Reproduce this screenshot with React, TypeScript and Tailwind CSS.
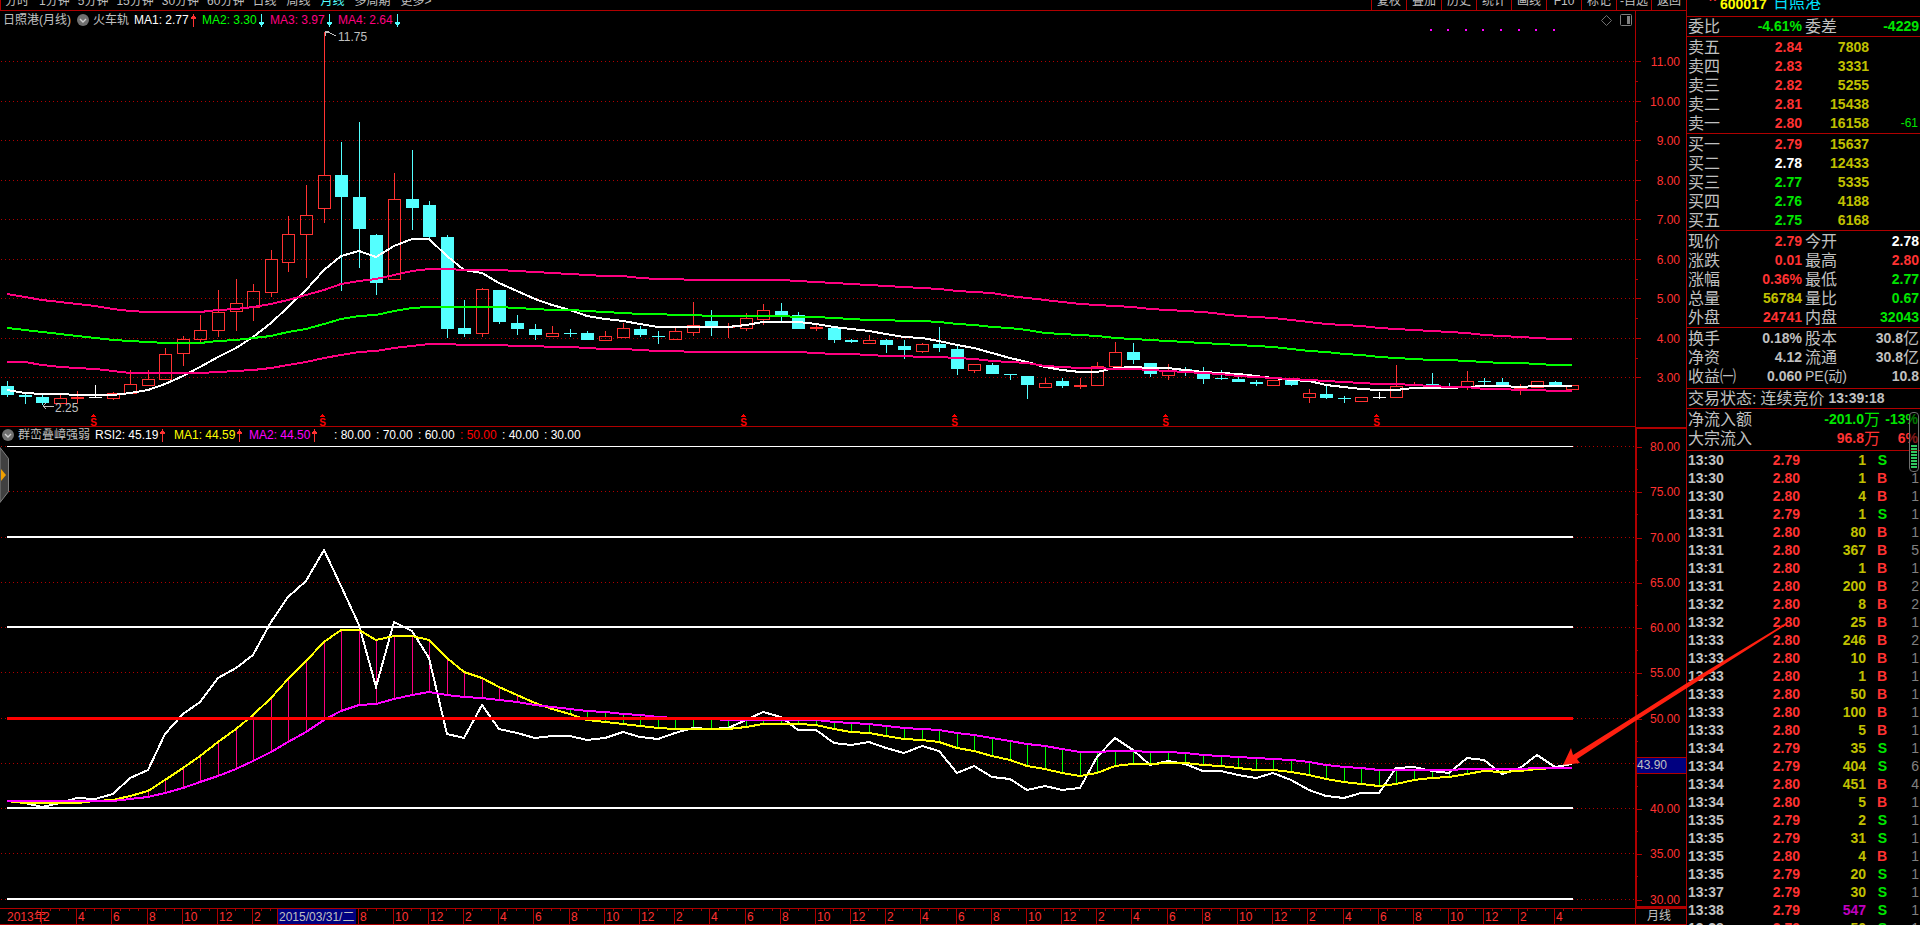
import { useMemo } from 'react';
import clsx from 'clsx';

const RED = '#ff3232';
const LINE = '#b00000';
const CYAN = '#54ffff';

const periods = ['分时', '1分钟', '5分钟', '15分钟', '30分钟', '60分钟', '日线', '周线', '月线', '多周期', '更多>'];
const tools = ['复权', '叠加', '历史', '统计', '画线', 'F10', '标记', '-自选', '返回'];

// [kind, high, body top, body bottom, low] for each month
type Candle = [string, number, number, number, number];
const candles: Candle[] = [
  ['c', 381, 386, 395, 397], ['c', 393, 395, 397, 404], ['c', 395, 397, 403, 405], ['r', 395, 398, 403, 404],
  ['r', 391, 397, 399, 403], ['w', 385, 397, 398, 398], ['r', 392, 393, 398, 400], ['r', 370, 384, 393, 393],
  ['r', 370, 379, 385, 386], ['r', 348, 354, 379, 380], ['r', 336, 339, 353, 366], ['r', 315, 330, 339, 343],
  ['r', 290, 312, 330, 337], ['r', 279, 303, 311, 331], ['r', 284, 291, 307, 321], ['r', 250, 259, 292, 297],
  ['r', 216, 234, 262, 272], ['r', 185, 215, 234, 278], ['r', 32, 175, 208, 223], ['c', 142, 175, 197, 291],
  ['c', 122, 197, 229, 268], ['c', 234, 235, 283, 295], ['r', 173, 199, 279, 280], ['c', 150, 199, 208, 230],
  ['c', 201, 205, 237, 238], ['c', 235, 237, 329, 338], ['c', 300, 328, 334, 337], ['r', 288, 289, 333, 337],
  ['c', 290, 290, 322, 324], ['c', 315, 323, 329, 335], ['c', 324, 329, 335, 340], ['r', 326, 333, 336, 337],
  ['c', 329, 333, 334, 337], ['c', 331, 333, 340, 340], ['r', 331, 336, 340, 340], ['r', 323, 328, 337, 338],
  ['c', 326, 329, 335, 337], ['c', 331, 336, 337, 344], ['r', 328, 331, 339, 339], ['r', 302, 325, 332, 336],
  ['c', 310, 321, 327, 336], ['r', 323, 327, 328, 338], ['r', 313, 318, 328, 331], ['r', 304, 310, 319, 325],
  ['c', 303, 311, 316, 321], ['c', 312, 315, 329, 329], ['r', 325, 327, 329, 331], ['c', 328, 328, 340, 343],
  ['c', 339, 340, 342, 343], ['r', 335, 340, 343, 343], ['c', 339, 340, 345, 353], ['c', 340, 346, 350, 359],
  ['r', 343, 344, 351, 353], ['c', 327, 344, 348, 352], ['c', 346, 349, 369, 375], ['r', 364, 364, 370, 373],
  ['c', 363, 365, 374, 374], ['c', 374, 374, 375, 380], ['c', 376, 376, 385, 399], ['r', 378, 383, 387, 387],
  ['c', 378, 381, 386, 388], ['r', 378, 385, 387, 389], ['r', 362, 366, 385, 385], ['r', 342, 352, 366, 368],
  ['c', 343, 352, 360, 364], ['c', 363, 363, 374, 377], ['r', 364, 371, 375, 380], ['c', 367, 369, 372, 376],
  ['c', 367, 374, 379, 384], ['c', 370, 378, 379, 380], ['c', 377, 379, 382, 382], ['c', 380, 382, 384, 386],
  ['r', 380, 380, 385, 385], ['c', 380, 380, 385, 386], ['r', 389, 393, 397, 403], ['c', 385, 394, 398, 399],
  ['c', 396, 398, 399, 403], ['r', 397, 397, 401, 401], ['w', 392, 397, 398, 399], ['r', 365, 386, 397, 397],
  ['r', 382, 384, 386, 386], ['c', 373, 384, 387, 387], ['c', 383, 387, 388, 388], ['r', 371, 381, 387, 390],
  ['c', 378, 381, 382, 386], ['c', 378, 382, 387, 387], ['r', 384, 387, 389, 395], ['r', 381, 381, 387, 387],
  ['c', 381, 382, 387, 387], ['r', 385, 385, 389, 389],
];

const ma1 = [
  390, 393, 394, 394, 395, 395, 395, 393, 390, 384, 376, 367, 357, 348, 337, 323, 307, 290, 270, 256, 251, 257, 246,
  239, 239, 256, 270, 273, 283, 291, 299, 305, 310, 316, 319, 321, 324, 327, 327, 327, 327, 327, 325, 322, 322, 322,
  324, 327, 329, 331, 334, 337, 338, 341, 345, 348, 353, 358, 362, 367, 370, 372, 372, 368, 367, 368, 368, 370, 372,
  373, 374, 376, 378, 380, 381, 385, 387, 389, 390, 390, 388, 388, 388, 387, 386, 386, 387, 386, 386, 386,
];
const ma2 = [
  328, 330, 332, 334, 336, 338, 340, 341, 342, 343, 343, 343, 341, 340, 338, 336, 332, 329, 324, 319, 316, 315, 311,
  308, 307, 307, 307, 307, 307, 308, 309, 310, 310, 311, 312, 313, 314, 314, 315, 315, 316, 316, 316, 316, 316, 317,
  317, 318, 319, 320, 320, 321, 321, 322, 324, 325, 327, 328, 330, 333, 334, 335, 336, 338, 339, 340, 341, 342, 343,
  344, 345, 346, 347, 349, 351, 352, 354, 355, 357, 358, 359, 360, 360, 361, 362, 363, 363, 364, 365, 365,
];
const ma3 = [
  294, 297, 300, 302, 304, 306, 309, 311, 312, 312, 312, 312, 310, 309, 307, 304, 300, 295, 290, 284, 281, 279, 275,
  271, 269, 269, 270, 270, 270, 271, 272, 273, 274, 275, 276, 276, 278, 279, 279, 280, 280, 280, 280, 280, 280, 281,
  282, 283, 284, 285, 286, 287, 288, 289, 291, 292, 293, 296, 298, 300, 302, 304, 305, 306, 307, 309, 310, 311, 312,
  314, 316, 317, 318, 320, 322, 324, 325, 326, 328, 329, 330, 331, 332, 333, 335, 336, 337, 338, 339, 339,
];
const ma4 = [
  362, 362, 365, 367, 368, 369, 371, 373, 373, 373, 373, 373, 372, 371, 370, 368, 365, 362, 358, 355, 352, 351, 348,
  346, 344, 344, 345, 345, 345, 346, 346, 347, 347, 348, 349, 349, 350, 351, 351, 352, 352, 352, 352, 352, 352, 352,
  353, 354, 354, 355, 356, 356, 357, 357, 358, 359, 361, 362, 363, 366, 367, 368, 368, 369, 369, 370, 371, 372, 373,
  374, 376, 377, 378, 379, 380, 381, 382, 383, 384, 384, 385, 386, 387, 387, 389, 389, 390, 390, 391, 391,
];

const rsi = [
  801, 803, 807, 803, 798, 799, 794, 778, 770, 734, 714, 702, 678, 668, 655, 622, 597, 581, 550, 586, 625, 687, 622,
  631, 658, 734, 738, 705, 729, 733, 738, 736, 736, 740, 738, 732, 737, 739, 733, 728, 729, 728, 720, 712, 717, 730,
  730, 743, 745, 742, 748, 753, 746, 751, 773, 766, 777, 779, 790, 786, 790, 788, 757, 738, 750, 765, 761, 764, 771,
  771, 775, 778, 773, 780, 790, 796, 798, 793, 793, 768, 767, 771, 773, 758, 760, 774, 768, 755, 767, 764,
];
const rsiMa1 = [
  801, 803, 803, 803, 803, 801, 800, 796, 791, 780, 768, 756, 742, 729, 715, 698, 679, 661, 642, 630, 630, 640, 636,
  636, 640, 658, 672, 678, 687, 695, 703, 709, 714, 720, 722, 724, 726, 728, 729, 729, 729, 729, 727, 724, 724, 724,
  725, 729, 732, 733, 736, 739, 740, 742, 748, 751, 756, 760, 766, 769, 773, 776, 773, 766, 764, 764, 763, 763, 765,
  766, 768, 770, 770, 772, 775, 779, 782, 784, 786, 784, 780, 778, 777, 774, 771, 772, 771, 769, 768, 768,
];
const rsiMa2 = [
  801, 801, 801, 801, 801, 801, 801, 799, 797, 793, 788, 782, 776, 769, 761, 752, 742, 732, 720, 711, 705, 704, 699,
  695, 692, 695, 697, 698, 700, 702, 705, 707, 709, 711, 712, 714, 715, 717, 718, 719, 719, 720, 720, 720, 720, 720,
  720, 722, 723, 724, 726, 728, 729, 730, 733, 735, 738, 741, 744, 746, 749, 752, 752, 751, 751, 752, 752, 753, 755,
  756, 757, 758, 759, 760, 762, 765, 767, 768, 770, 770, 770, 770, 770, 769, 769, 769, 769, 768, 768, 768,
];

const levels = [
  { line: 80, y: 446, color: '#ffffff', size: 1 },
  { line: 70, y: 537, color: '#ffffff', size: 2 },
  { line: 60, y: 627, color: '#ffffff', size: 2 },
  { line: 50, y: 718, color: '#ff0000', size: 3 },
  { line: 40, y: 808, color: '#ffffff', size: 2 },
  { line: 30, y: 899, color: '#ffffff', size: 2 },
];

const sells = [
  ['卖五', '2.84', '7808'],
  ['卖四', '2.83', '3331'],
  ['卖三', '2.82', '5255'],
  ['卖二', '2.81', '15438'],
  ['卖一', '2.80', '16158', '-61'],
];
const buys = [
  ['买一', '2.79', '15637'],
  ['买二', '2.78', '12433'],
  ['买三', '2.77', '5335'],
  ['买四', '2.76', '4188'],
  ['买五', '2.75', '6168'],
];

const trades = [
  ['13:30', '2.79', '1', 'S', ''],
  ['13:30', '2.80', '1', 'B', '1'],
  ['13:30', '2.80', '4', 'B', '1'],
  ['13:31', '2.79', '1', 'S', '1'],
  ['13:31', '2.80', '80', 'B', '1'],
  ['13:31', '2.80', '367', 'B', '5'],
  ['13:31', '2.80', '1', 'B', '1'],
  ['13:31', '2.80', '200', 'B', '2'],
  ['13:32', '2.80', '8', 'B', '2'],
  ['13:32', '2.80', '25', 'B', '1'],
  ['13:33', '2.80', '246', 'B', '2'],
  ['13:33', '2.80', '10', 'B', '1'],
  ['13:33', '2.80', '1', 'B', '1'],
  ['13:33', '2.80', '50', 'B', '1'],
  ['13:33', '2.80', '100', 'B', '1'],
  ['13:33', '2.80', '5', 'B', '1'],
  ['13:34', '2.79', '35', 'S', '1'],
  ['13:34', '2.79', '404', 'S', '6'],
  ['13:34', '2.80', '451', 'B', '4'],
  ['13:34', '2.80', '5', 'B', '1'],
  ['13:35', '2.79', '2', 'S', '1'],
  ['13:35', '2.79', '31', 'S', '1'],
  ['13:35', '2.80', '4', 'B', '1'],
  ['13:35', '2.79', '20', 'S', '1'],
  ['13:37', '2.79', '30', 'S', '1'],
  ['13:38', '2.79', '547', 'S', '1'],
  ['13:38', '2.79', '50', 'S', '1'],
];

const candleX = (i: number) => Math.round(7 + i * 17.588);
const priceY = (p: number) => Math.round(61 + (11 - p) * 39.5);
const rsiY = (v: number) => Math.round(446 + (80 - v) * 9.05);
const points = (ys: number[]) => ys.map((y, i) => `${candleX(i)},${y}`).join(' ');

const Trend = ({ up = false }) => (
  <svg width="5" height="13" viewBox="0 0 5 13" fill={up ? RED : CYAN} shapeRendering="crispEdges" className="shrink-0">
    <g transform={up ? undefined : 'rotate(180 2.5 6.5)'}>
      <path d="M2 0h1v13h-1z M1 2h3v1h-3z M0 3h5v2h-5z" />
    </g>
  </svg>
);

const Fold = () => (
  <button aria-label="指标菜单" className="shrink-0">
    <svg width="12" height="12" viewBox="0 0 12 12">
      <circle cx="6" cy="6" r="6" fill="#707070" />
      <path d="M3 5l3 3 3-3" fill="none" stroke="#d0d0d0" strokeWidth="1.4" />
    </svg>
  </button>
);

const Legend = ({ label, color, up, className }: { label: string; color: string; up: boolean; className: string }) => (
  <span className={clsx('flex shrink-0 items-center gap-[2px]', color, className)}>
    {label}
    <Trend up={up} />
  </span>
);

const Toolbar = () => (
  <nav className="flex h-[11px] shrink-0 justify-between overflow-hidden border-b border-l border-[#b00000] text-xs leading-3">
    <div className="flex pl-1">
      {periods.map((p) => (
        <button
          key={p}
          className={clsx(
            'flex h-full items-end whitespace-nowrap pb-[3px]',
            p.endsWith('分钟') ? 'pr-2' : 'pr-[10px]',
            p === '月线' && 'text-[#54ffff]',
          )}
        >
          {p}
        </button>
      ))}
    </div>
    <div className="flex">
      {tools.map((t) => (
        <button
          key={t}
          className="flex h-full w-[35px] items-end justify-center whitespace-nowrap border-l border-[#b00000] pb-[3px]"
        >
          {t}
        </button>
      ))}
    </div>
  </nav>
);

const Grid = ({ ys }: { ys: number[] }) => (
  <>
    {ys.map((y) => (
      <line key={y} x1="1" x2="100%" y1={y + 0.5} y2={y + 0.5} stroke={LINE} strokeDasharray="1 3" />
    ))}
  </>
);

const PriceChart = () => {
  const prices = [11, 10, 9, 8, 7, 6, 5, 4, 3];

  return (
    <svg width="100%" height="415" className="block" shapeRendering="crispEdges">
      <g transform="translate(0 -11)">
        <Grid ys={prices.map(priceY)} />
        {candles.map(([kind, high, top, bottom, low], i) => {
          const x = candleX(i);
          const color = kind === 'c' ? CYAN : kind === 'w' ? '#ffffff' : RED;
          const hollow = kind === 'r' && bottom - top > 2;
          return (
            <g key={i}>
              <path d={`M${x} ${high}h1V${hollow ? top : low}h-1z M${x} ${bottom}h1V${low}h-1z`} fill={color} />
              {hollow ? (
                <rect x={x - 5.5} y={top + 0.5} width="12" height={bottom - top} fill="none" stroke={color} />
              ) : (
                <rect x={x - 6} y={top} width="13" height={Math.max(bottom - top, 1)} fill={color} />
              )}
            </g>
          );
        })}
        <g fill="none" strokeWidth="2">
          <polyline points={points(ma1)} stroke="#ffffff" />
          <polyline points={points(ma2)} stroke="#00ff00" />
          <polyline points={points(ma3)} stroke="#ff0080" />
          <polyline points={points(ma4)} stroke="#ff0080" />
        </g>

        {/* High and low marks */}
        <g fill="none" stroke="#c0c0c0">
          <path d="M325 36V31h4 M326 32l4 1 6 3" />
          <path d="M54 406H43 M46 403l-3 3 3 3" />
        </g>
        <g fill="#c0c0c0" fontSize="12">
          <text x="338" y="41">11.75</text>
          <text x="55" y="412">2.25</text>
        </g>

        {/* Dividend marks */}
        {[93, 322, 743, 954, 1165, 1376].map((x) => (
          <g key={x} fill="#ff0000">
            <path d={`M${x} 414h1v1h1v1h1v1h-5v-1h1v-1h1z`} />
            <text x={x + 0.5} y="426" fontSize="10" fontWeight="700" textAnchor="middle">S</text>
          </g>
        ))}
        {[81, 82, 83, 84, 85, 86, 87, 88].map((i) => (
          <rect key={i} x={candleX(i) - 2} y="29" width="2" height="2" fill="#ff00ff" />
        ))}
      </g>
    </svg>
  );
};

const StrengthChart = () => {
  const steps = [80, 75, 70, 65, 60, 55, 50, 45, 40, 35, 30];

  return (
    <svg width="100%" height="481" className="block" shapeRendering="crispEdges">
      <g transform="translate(0 -427)">
        <Grid ys={steps.map(rsiY)} />
        {rsiMa1.map((y, i) => (
          <line
            key={i}
            x1={candleX(i) + 0.5}
            x2={candleX(i) + 0.5}
            y1={y}
            y2={rsiMa2[i]}
            stroke={y < rsiMa2[i] ? '#ff0080' : '#00ff00'}
          />
        ))}
        <g fill="none" strokeWidth="2">
          <polyline points={points(rsi)} stroke="#ffffff" />
          <polyline points={points(rsiMa1)} stroke="#ffff00" />
          <polyline points={points(rsiMa2)} stroke="#ff00ff" />
        </g>
        {levels.map((l) => (
          <rect key={l.line} x="7" y={l.y - (l.size > 1 ? 1 : 0)} width="1566" height={l.size} fill={l.color} />
        ))}
      </g>
    </svg>
  );
};

const PriceAxis = () => (
  <svg width="50" height="415" className="block" shapeRendering="crispEdges">
    <g transform="translate(0 -11)">
      {[11, 10, 9, 8, 7, 6, 5, 4, 3].map((p) => (
        <g key={p}>
          <rect y={priceY(p)} width="5" height="1" fill={LINE} />
          {p > 3 && <rect y={priceY(p) + 20} width="2" height="1" fill={LINE} />}
          <text x="44" y={priceY(p) + 5} fontSize="12" fill={RED} textAnchor="end">{p.toFixed(2)}</text>
        </g>
      ))}
    </g>
  </svg>
);

const StrengthAxis = () => (
  <svg width="49" height="479" className="block" shapeRendering="crispEdges">
    <g transform="translate(0 -428)">
      {[80, 75, 70, 65, 60, 55, 50, 45, 40, 35, 30].map((v) => (
        <g key={v}>
          <rect y={rsiY(v)} width="5" height="1" fill={LINE} />
          {v > 30 && <rect y={rsiY(v) + 22} width="1" height="1" fill={LINE} />}
          {v !== 45 && (
            <text x="43" y={rsiY(v) + 4} fontSize="12" fill={RED} textAnchor="end">{v.toFixed(2)}</text>
          )}
        </g>
      ))}
      <rect x="-1" y="756.5" width="51" height="16" fill="#000080" stroke={LINE} />
      <text x="0" y="768" fontSize="12" fill="#c0c0c0">43.90</text>
    </g>
  </svg>
);

const TimeAxis = () => {
  const months = useMemo(() => Array.from({ length: 44 }, (_, k) => ({ x: Math.round(41 + k * 35.176), m: (k % 6) * 2 + 2 })), []);

  return (
    <svg width="100%" height="15" className="block" shapeRendering="crispEdges">
      <text x="7" y="12" fontSize="12" fill={RED}>2013年</text>
      {months.map(({ x, m }) => (
        <g key={x}>
          <rect x={x} y="0" width="1" height="15" fill={LINE} />
          <path d={`M${x + 9} 0v2h1v-2z M${x + 18} 0v2h1v-2z M${x + 27} 0v2h1v-2z`} fill={LINE} />
          {(x < 277 || x > 356) && (
            <text x={x + 2} y="12" fontSize="12" fill={RED}>{m}</text>
          )}
        </g>
      ))}
      {/* Date under the cursor */}
      <rect x="277" y="0" width="79" height="15" fill="#000080" />
      <rect x="277" y="0" width="1" height="15" fill={LINE} />
      <text x="279" y="12" fontSize="12" fill="#c0c0c0">2015/03/31/二</text>
    </svg>
  );
};

const priceColor = (price: string) => {
  if (price === '2.78') return 'text-white';
  return Number(price) > 2.78 ? 'text-[#ff3232]' : 'text-[#00e600]';
};

const Quotes = ({ rows }: { rows: string[][] }) => (
  <div className="h-[97px] shrink-0 border-t border-[#b00000] pt-px pl-px">
    <table className="w-full table-fixed text-right">
      <tbody>
        {rows.map(([name, price, volume, change]) => (
          <tr key={name} className="h-[19px] text-sm leading-[19px] font-bold">
            <th className="w-[50px] text-left text-base leading-[19px] font-normal">{name}</th>
            <td className={clsx('w-[64px]', priceColor(price))}>{price}</td>
            <td className="w-[67px] text-[#c0c000]">{volume}</td>
            <td className="pr-[2px] text-xs leading-[19px] font-normal text-[#00e600]">{change}</td>
          </tr>
        ))}
      </tbody>
    </table>
  </div>
);

type StatProps = { name: string; value: string; color?: string; unit?: string; small?: boolean };
const Stat = ({ name, value, color, unit, small }: StatProps) => (
  <div className="flex h-[19px] items-center justify-between whitespace-nowrap">
    <dt className={clsx('leading-[19px]', small ? 'text-sm' : 'text-base')}>{name}</dt>
    <dd className={clsx('flex items-center text-sm leading-[19px] font-bold', color)}>
      {value}
      {unit && <span className="text-base leading-[19px] font-normal">{unit}</span>}
    </dd>
  </div>
);

const SidePanel = () => (
  <aside className="relative flex w-[234px] shrink-0 flex-col overflow-hidden border-l border-[#b00000]">
    {/* Stock name */}
    <div className="flex h-4 shrink-0 items-end pb-[5px] pl-[22px]">
      <span className="mb-2 w-[11px] text-[10px] leading-[10px] font-bold text-[#ff3232]">R</span>
      <span className="w-[53px] text-sm leading-[14px] font-bold text-[#ffff00]">600017</span>
      <h1 className="text-base leading-4 text-[#00e0ff]">日照港</h1>
    </div>

    <dl className="grid h-5 shrink-0 grid-cols-[114px_114px] gap-x-[3px] border-t border-[#b00000] pl-px">
      <Stat name="委比" value="-4.61%" color="text-[#00e600]" />
      <Stat name="委差" value="-4229" color="text-[#00e600]" />
    </dl>

    <Quotes rows={sells} />
    <Quotes rows={buys} />

    <dl className="grid h-[97px] shrink-0 grid-cols-[114px_114px] content-start gap-x-[3px] border-t border-[#b00000] pt-px pl-px">
      <Stat name="现价" value="2.79" color="text-[#ff3232]" />
      <Stat name="今开" value="2.78" color="text-white" />
      <Stat name="涨跌" value="0.01" color="text-[#ff3232]" />
      <Stat name="最高" value="2.80" color="text-[#ff3232]" />
      <Stat name="涨幅" value="0.36%" color="text-[#ff3232]" />
      <Stat name="最低" value="2.77" color="text-[#00e600]" />
      <Stat name="总量" value="56784" color="text-[#c0c000]" />
      <Stat name="量比" value="0.67" color="text-[#00e600]" />
      <Stat name="外盘" value="24741" color="text-[#ff3232]" />
      <Stat name="内盘" value="32043" color="text-[#00e600]" />
    </dl>
    <dl className="grid h-[61px] shrink-0 grid-cols-[114px_114px] content-start gap-x-[3px] border-t border-[#b00000] pt-px pl-px">
      <Stat name="换手" value="0.18%" />
      <Stat name="股本" value="30.8" unit="亿" />
      <Stat name="净资" value="4.12" />
      <Stat name="流通" value="30.8" unit="亿" />
      <Stat name="收益㈠" value="0.060" />
      <Stat name="PE(动)" value="10.8" small />
    </dl>

    <p className="flex h-5 shrink-0 items-center gap-1 border-t border-[#b00000] pl-px text-base leading-[19px] whitespace-nowrap">
      <span>交易状态:</span>
      <span>连续竞价</span>
      <time className="text-sm leading-[19px] font-bold">13:39:18</time>
    </p>

    {/* Money flow */}
    <div className="h-[42px] shrink-0 border-t border-[#b00000] pt-px pr-[2px] pl-px">
      <div className="flex h-[19px] text-base leading-[19px]">
        <span className="w-[74px]">净流入额</span>
        <span className="flex w-[118px] items-center justify-end text-[#00e600]"><b className="text-sm leading-[19px]">-201.0</b>万</span>
        <b className="flex-1 text-right text-sm leading-[19px] text-[#00e600]">-13%</b>
      </div>
      <div className="flex h-[19px] text-base leading-[19px]">
        <span className="w-[74px]">大宗流入</span>
        <span className="flex w-[118px] items-center justify-end text-[#ff3232]"><b className="text-sm leading-[19px]">96.8</b>万</span>
        <b className="flex-1 text-right text-sm leading-[19px] text-[#ff3232]">6%</b>
      </div>
    </div>

    {/* Trades */}
    <div className="min-h-0 flex-1 overflow-hidden border-t border-[#b00000] pl-px">
      <table className="w-full table-fixed text-right text-sm leading-[18px] font-bold">
        <tbody>
          {trades.map(([time, price, volume, side, count], i) => (
            <tr key={i} className="h-[18px]">
              <td className="w-[50px] text-left">{time}</td>
              <td className="w-[62px] text-[#ff3232]">{price}</td>
              <td className={clsx('w-[66px]', volume === '547' ? 'text-[#c000c0]' : 'text-[#c0c000]')}>{volume}</td>
              <td className={clsx('w-[21px]', side === 'B' ? 'text-[#ff3232]' : 'text-[#00e600]')}>{side}</td>
              <td className="pr-px font-normal text-[#808080]">{count}</td>
            </tr>
          ))}
        </tbody>
      </table>
    </div>

    {/* Level gauge over the panel edge */}
    <div className="absolute top-[412px] right-px flex h-[60px] w-[10px] flex-col justify-end gap-px rounded-[4px] border border-[#707070] bg-black/50 px-px pb-[3px]">
      {[1, 2, 3, 4, 5, 6, 7, 8].map((n) => (
        <i key={n} className="h-[2px] w-full bg-[#30c860]" />
      ))}
    </div>
  </aside>
);

const App = () => {
  return (
    <div className="relative flex h-screen overflow-hidden bg-black font-['Liberation_Sans','Noto_Sans_CJK_SC',sans-serif] text-[#c0c0c0]">
      <main className="flex min-w-0 flex-1 flex-col">
        <Toolbar />

        {/* Candles */}
        <section className="flex h-[416px] shrink-0">
          <div className="relative min-w-0 flex-1 border-b border-[#b00000]">
            <PriceChart />
            <div className="absolute top-0 left-0 flex h-[18px] w-full items-center pl-[3px] text-xs whitespace-nowrap">
              <span className="w-[74px]">日照港(月线)</span>
              <Fold />
              <span className="w-[45px] pl-1">火车轨</span>
              <Legend label="MA1: 2.77" color="text-white" up className="w-[68px]" />
              <Legend label="MA2: 3.30" color="text-[#00ff00]" up={false} className="w-[68px]" />
              <Legend label="MA3: 3.97" color="text-[#ff0080]" up={false} className="w-[68px]" />
              <Legend label="MA4: 2.64" color="text-[#ff0080]" up={false} className="w-[68px]" />
              <div className="flex flex-1 items-center justify-end gap-2 pr-[3px]">
                <button aria-label="标记">
                  <svg width="11" height="11" viewBox="0 0 11 11" className="block">
                    <path d="M5.5 0.5l5 5-5 5-5-5z" fill="none" stroke="#707070" />
                  </svg>
                </button>
                <button aria-label="侧栏">
                  <svg width="12" height="12" viewBox="0 0 12 12" className="block">
                    <rect x="0.5" y="0.5" width="11" height="11" rx="1" fill="none" stroke="#808080" />
                    <path d="M7 2h3v8h-3z" fill="#808080" />
                  </svg>
                </button>
              </div>
            </div>
          </div>
          <div className="w-[51px] border-l border-[#b00000]">
            <PriceAxis />
          </div>
        </section>

        {/* Strength indicator */}
        <section className="flex min-h-0 flex-1 overflow-hidden">
          <div className="relative min-w-0 flex-1">
            <StrengthChart />
            <div className="absolute top-0 left-0 flex h-4 items-center pl-[2px] text-xs whitespace-nowrap">
              <Fold />
              <span className="w-[81px] pl-1">群峦叠嶂强弱</span>
              <Legend label="RSI2: 45.19" color="text-white" up className="w-[79px]" />
              <Legend label="MA1: 44.59" color="text-[#ffff00]" up className="w-[75px]" />
              <Legend label="MA2: 44.50" color="text-[#ff00ff]" up className="w-[85px]" />
              {levels.map((l) => (
                <span key={l.line} className={clsx('w-[42px]', l.line === 50 ? 'text-[#ff0000]' : 'text-white')}>
                  : {l.line}.00
                </span>
              ))}
            </div>
            <button aria-label="展开" className="absolute top-5 left-0">
              <svg width="10" height="56" viewBox="0 0 10 56" className="block">
                <path d="M0 0.5L8.5 11.5V44.5L0 55.5z" fill="#404040" stroke="#808080" />
                <path d="M1 22l5 6-5 6z" fill="#f0a000" />
              </svg>
            </button>
          </div>
          <div className="w-[51px] border-y-2 border-l-2 border-[#b00000]">
            <StrengthAxis />
          </div>
        </section>

        <footer className="flex h-[17px] shrink-0 border-y border-[#b00000]">
          <div className="min-w-0 flex-1">
            <TimeAxis />
          </div>
          <span className="w-[51px] border-l border-[#b00000] pl-[11px] text-xs leading-[15px]">月线</span>
        </footer>
      </main>

      <SidePanel />

      {/* Pointer arrow drawn over the chart and the trades */}
      <svg width="230" height="150" viewBox="1560 620 230 150" className="pointer-events-none absolute right-[130px] bottom-[155px]">
        <path d="M1563 765L1571 748 1573 755 1640 713 1687 683 1786 623 1786 625 1687 688 1640 718 1577 759 1580 763z" fill="#ff2010" />
      </svg>
    </div>
  );
};

export default App;
